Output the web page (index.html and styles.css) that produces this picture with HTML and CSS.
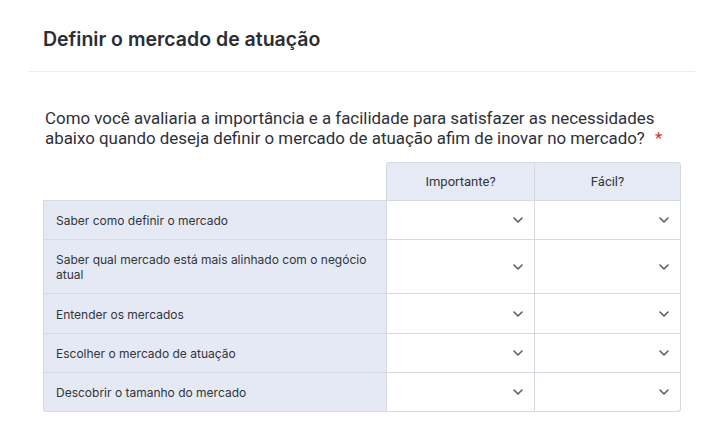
FILE: index.html
```html
<!DOCTYPE html>
<html lang="pt">
<head>
<meta charset="utf-8">
<link rel="stylesheet" href="styles.css">
</head>
<body>
<div class="page">
  <header class="head">
    <h1 class="title">Definir o mercado de atuação</h1>
  </header>
  <section class="body">
    <p class="question">Como você avaliaria a importância e a facilidade para satisfazer as necessidades abaixo quando deseja definir o mercado de atuação afim de inovar no mercado? <span class="req">*</span></p>
    <div class="matrix">
      <div class="corner"></div>
      <div class="colhead">Importante?</div>
      <div class="colhead last">Fácil?</div>

      <div class="label">Saber como definir o mercado</div>
      <div class="sel"><svg viewBox="0 0 10 6"><path d="M1 1l4 4 4-4"/></svg></div>
      <div class="sel last"><svg viewBox="0 0 10 6"><path d="M1 1l4 4 4-4"/></svg></div>

      <div class="label">Saber qual mercado está mais alinhado com o negócio atual</div>
      <div class="sel"><svg viewBox="0 0 10 6"><path d="M1 1l4 4 4-4"/></svg></div>
      <div class="sel last"><svg viewBox="0 0 10 6"><path d="M1 1l4 4 4-4"/></svg></div>

      <div class="label">Entender os mercados</div>
      <div class="sel"><svg viewBox="0 0 10 6"><path d="M1 1l4 4 4-4"/></svg></div>
      <div class="sel last"><svg viewBox="0 0 10 6"><path d="M1 1l4 4 4-4"/></svg></div>

      <div class="label">Escolher o mercado de atuação</div>
      <div class="sel"><svg viewBox="0 0 10 6"><path d="M1 1l4 4 4-4"/></svg></div>
      <div class="sel last"><svg viewBox="0 0 10 6"><path d="M1 1l4 4 4-4"/></svg></div>

      <div class="label bottom">Descobrir o tamanho do mercado</div>
      <div class="sel bottom"><svg viewBox="0 0 10 6"><path d="M1 1l4 4 4-4"/></svg></div>
      <div class="sel last bottom br"><svg viewBox="0 0 10 6"><path d="M1 1l4 4 4-4"/></svg></div>
    </div>
  </section>
</div>
</body>
</html>
```

FILE: styles.css
```css
* { box-sizing: border-box; }
html, body { margin: 0; padding: 0; background: #fff; }
body { font-family: Inter, "Noto Sans", sans-serif; color: #2c2e34; }
.page { width: 720px; height: 442px; overflow: hidden; }
.head {
  margin: 0 25px 0 28px;
  padding: 29px 0 21px 15px;
  border-bottom: 1px solid #ececee;
}
.title {
  margin: 0;
  font-size: 19.5px;
  line-height: 21px;
  font-weight: 600;
  color: #2b2d33;
}
.body { padding: 36px 0 0 43px; }
.question {
  margin: 0 0 0 2px;
  width: 630px;
  font-family: Roboto, sans-serif;
  font-size: 16.9px;
  line-height: 20px;
  color: #2e3137;
}
.req { color: #d8342c; margin-left: 6px; }
.matrix {
  margin-top: 14px;
  display: grid;
  grid-template-columns: 343px 148px 147px;
  grid-template-rows: 39px 39px 54px 40px 39px 39px;
  width: 638px;
}
.corner { border-bottom: 1px solid #d6d9df; }
.colhead {
  background: #e6eaf4;
  border-top: 1px solid #d6d9df;
  border-left: 1px solid #d6d9df;
  border-bottom: 1px solid #d6d9df;
  display: flex;
  align-items: center;
  justify-content: center;
  font-family: Roboto, sans-serif;
  font-size: 13px;
  color: #33363c;
}
.colhead:nth-child(2) { border-top-left-radius: 3px; }
.colhead.last { border-right: 1px solid #d6d9df; border-top-right-radius: 3px; }
.label {
  background: #e5e9f4;
  border-left: 1px solid #d6d9df;
  border-bottom: 1px solid #d6d9df;
  display: flex;
  align-items: center;
  padding: 1px 16px 0 12px;
  font-size: 12px;
  line-height: 15px;
  color: #32353b;
}
.label.bottom { border-bottom-left-radius: 3px; }
.sel {
  background: #fff;
  border-left: 1px solid #d6d9df;
  border-bottom: 1px solid #d6d9df;
  display: flex;
  align-items: center;
  justify-content: flex-end;
  padding-right: 11px;
}
.sel.last { border-right: 1px solid #d6d9df; }
.sel.br { border-bottom-right-radius: 3px; }
.sel svg { width: 10px; height: 6px; fill: none; stroke: #5a5d63; stroke-width: 1.6; stroke-linecap: round; stroke-linejoin: round; }
```
